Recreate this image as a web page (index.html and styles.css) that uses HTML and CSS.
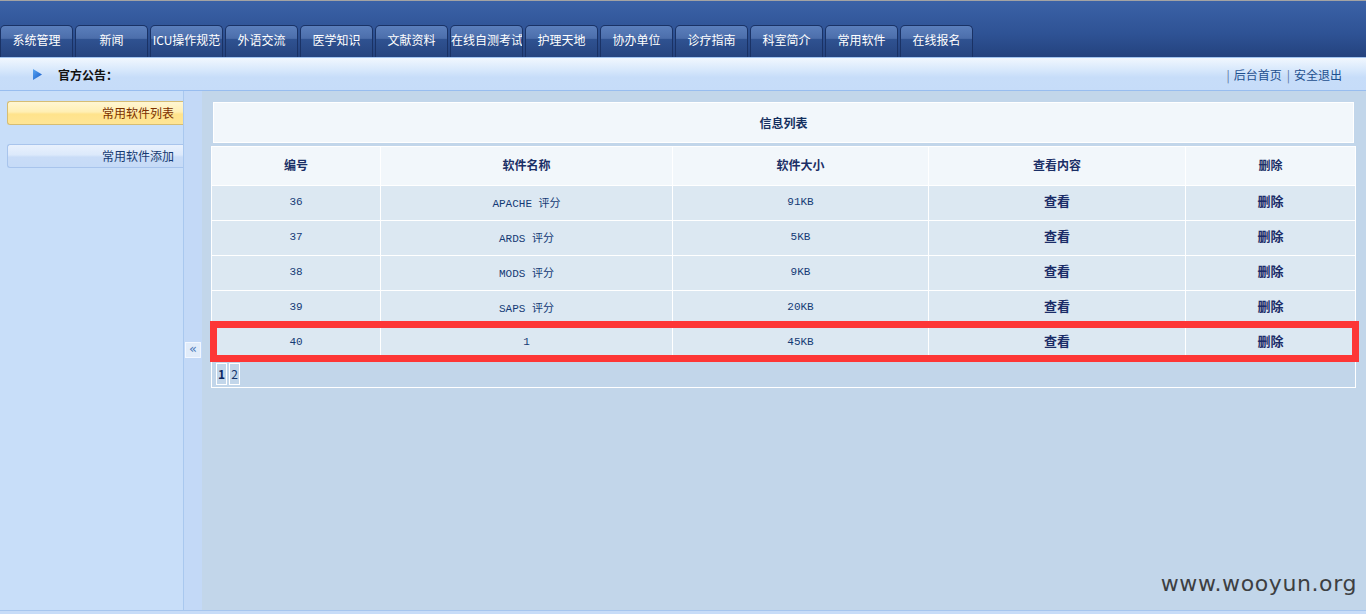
FILE: index.html
```html
<!DOCTYPE html>
<html lang="zh-CN">
<head>
<meta charset="utf-8">
<title>常用软件</title>
<link rel="stylesheet" href="styles.css">
</head>
<body>
<div class="page">
  <header class="top">
    <nav class="tabs">
      <a class="tab">系统管理</a>
      <a class="tab">新闻</a>
      <a class="tab">ICU操作规范</a>
      <a class="tab">外语交流</a>
      <a class="tab">医学知识</a>
      <a class="tab">文献资料</a>
      <a class="tab">在线自测考试</a>
      <a class="tab">护理天地</a>
      <a class="tab">协办单位</a>
      <a class="tab">诊疗指南</a>
      <a class="tab">科室简介</a>
      <a class="tab">常用软件</a>
      <a class="tab">在线报名</a>
    </nav>
  </header>
  <div class="notice">
    <div class="notice-left">
      <svg class="arrow" width="9" height="11" viewBox="0 0 9 11"><defs><linearGradient id="ag" x1="0" y1="0" x2="1" y2="1"><stop offset="0" stop-color="#5aa6f2"/><stop offset="1" stop-color="#1459c8"/></linearGradient></defs><polygon points="0,0 9,5.5 0,11" fill="url(#ag)"/></svg>
      <span class="notice-title">官方公告：</span>
    </div>
    <div class="notice-links">
      <span class="sep">|</span><a>后台首页</a><span class="sep">|</span><a>安全退出</a>
    </div>
  </div>
  <div class="body">
    <aside class="sidebar">
      <a class="side-btn active">常用软件列表</a>
      <a class="side-btn">常用软件添加</a>
    </aside>
    <div class="splitter">
      <span class="collapse">«</span>
    </div>
    <main class="main">
      <div class="panel-title">信息列表</div>
      <table class="list">
        <colgroup>
          <col class="c1"><col class="c2"><col class="c3"><col class="c4"><col class="c5">
        </colgroup>
        <thead>
          <tr><th>编号</th><th>软件名称</th><th>软件大小</th><th>查看内容</th><th>删除</th></tr>
        </thead>
        <tbody>
          <tr><td>36</td><td>APACHE 评分</td><td>91KB</td><td class="act">查看</td><td class="act">删除</td></tr>
          <tr><td>37</td><td>ARDS 评分</td><td>5KB</td><td class="act">查看</td><td class="act">删除</td></tr>
          <tr><td>38</td><td>MODS 评分</td><td>9KB</td><td class="act">查看</td><td class="act">删除</td></tr>
          <tr><td>39</td><td>SAPS 评分</td><td>20KB</td><td class="act">查看</td><td class="act">删除</td></tr>
          <tr><td>40</td><td>1</td><td>45KB</td><td class="act">查看</td><td class="act">删除</td></tr>
          <tr class="pager-row"><td colspan="5"><div class="pager"><span class="pg cur">1</span><span class="pg">2</span></div></td></tr>
        </tbody>
      </table>
    </main>
  </div>
  <div class="bottom"></div>
  <div class="highlight"></div>
  <div class="watermark">www.wooyun.org</div>
</div>
</body>
</html>
```
FILE: styles.css
```css
html, body {
  margin: 0;
  padding: 0;
  height: 614px;
  overflow: hidden;
}
body {
  font-family: "Noto Sans CJK SC", "Liberation Sans", sans-serif;
  font-size: 12px;
  background: #c8def9;
}
a { cursor: pointer; }
.page {
  position: relative;
  width: 1366px;
  height: 614px;
  display: flex;
  flex-direction: column;
}

/* top bar */
.top {
  box-sizing: border-box;
  height: 57px;
  border-top: 1px solid #a3a3a3;
  background: linear-gradient(#3b62a7, #2e5294 60%, #24427e);
  display: flex;
  align-items: flex-end;
}
.tabs {
  display: flex;
  gap: 2px;
  height: 32px;
}
.tab {
  box-sizing: border-box;
  width: 73px;
  height: 32px;
  border: 1px solid #1a3265;
  border-bottom: none;
  border-radius: 5px 5px 0 0;
  background: linear-gradient(#5b7fbc 0%, #4c6eab 40%, #2f5291 42%, #26447f 100%);
  color: #fff;
  font-size: 12px;
  line-height: 27px;
  text-align: center;
  white-space: nowrap;
  overflow: hidden;
}

/* notice bar */
.notice {
  box-sizing: border-box;
  height: 34px;
  border-top: 1px solid #a2c4f1;
  border-bottom: 1px solid #98bdef;
  background: linear-gradient(#f1f7fe 0%, #d9e9fc 35%, #c7ddf9 60%, #c6dcf9 100%);
  display: flex;
  align-items: center;
  justify-content: space-between;
  padding: 0 24px 0 33px;
}
.notice-left {
  display: flex;
  align-items: center;
  gap: 16px;
}
.notice-title {
  color: #111;
  font-size: 12px;
  font-weight: bold;
}
.notice-links {
  color: #1d4f8f;
  font-size: 12px;
  display: flex;
  align-items: center;
}
.notice-links .sep {
  color: #5a78a0;
  margin: 0 4px 0 5px;
}

/* body */
.body {
  flex: 1;
  display: flex;
  min-height: 0;
}
.sidebar {
  box-sizing: border-box;
  width: 185px;
  border-right: 1px solid #a9c8ef;
  background: #c8def9;
  display: flex;
  flex-direction: column;
  gap: 19px;
  padding-top: 10px;
  padding-left: 7px;
}
.side-btn {
  display: block;
  box-sizing: border-box;
  height: 24px;
  border: 1px solid #a8c4ec;
  border-right: none;
  border-radius: 3px 0 0 3px;
  background: linear-gradient(#e9f1fd 0%, #dce9fb 45%, #c9dcf7 55%, #c6dbf7 100%);
  color: #163a72;
  font-size: 12px;
  line-height: 21px;
  text-align: right;
  padding-right: 9px;
}
.side-btn.active {
  border-color: #d6bd73;
  background: linear-gradient(#fff6d2 0%, #ffefb4 45%, #ffe38c 55%, #ffe595 100%);
  color: #7b3000;
}
.splitter {
  width: 18px;
  background: #c3d9f7;
  display: flex;
  align-items: center;
  justify-content: center;
}
.collapse {
  box-sizing: border-box;
  width: 16px;
  height: 16px;
  margin-top: -2px;
  background: #e1ecfa;
  border: 1px solid #f2f7ff;
  color: #4b79b9;
  font-size: 13px;
  line-height: 12px;
  text-align: center;
  font-family: "DejaVu Sans", sans-serif;
}
.main {
  flex: 1;
  background: #c2d6ea;
  padding: 11px 10px 0 9px;
  box-sizing: border-box;
}
.panel-title {
  box-sizing: border-box;
  height: 41px;
  margin: 0 2px 3px;
  background: #f2f7fb;
  border: 1px solid #fff;
  color: #15305f;
  font-weight: bold;
  font-size: 12px;
  line-height: 40px;
  text-align: center;
}

/* table */
.list {
  width: 1144px;
  border-collapse: collapse;
  border: 1px solid #fff;
  table-layout: fixed;
}
.c1 { width: 169px; }
.c2 { width: 292px; }
.c3 { width: 256px; }
.c4 { width: 257px; }
.c5 { width: 170px; }
.list thead tr { height: 39px; }
.list tbody tr { height: 35px; }
.list th, .list td {
  border: 1px solid #fff;
  text-align: center;
  padding: 0;
}
.list th {
  background: #f2f7fb;
  color: #1b2f66;
  font-size: 12px;
  font-weight: bold;
  padding-bottom: 4px;
}
.list td {
  background: #dce8f2;
  color: #143a75;
  font-size: 11px;
  font-family: "Liberation Mono", "Noto Sans CJK SC", monospace;
  padding-bottom: 2px;
}
.list td.act {
  font-family: "Noto Sans CJK SC", sans-serif;
  font-size: 13px;
  font-weight: bold;
  color: #1b2c68;
  padding-bottom: 5px;
}
.list .pager-row { height: 27px; }
.list .pager-row td {
  background: transparent;
  text-align: left;
  border: none;
  padding: 0;
}
.pager {
  display: flex;
  gap: 2px;
  padding-left: 4px;
}
.pg {
  box-sizing: border-box;
  width: 11px;
  height: 22px;
  border: 1px solid #fff;
  color: #15366d;
  font-size: 12px;
  line-height: 19px;
  text-align: center;
  font-family: "Noto Sans CJK SC", sans-serif;
}
.pg.cur {
  font-weight: bold;
  color: #0c2660;
}

.bottom {
  box-sizing: border-box;
  height: 4px;
  border-top: 1px solid #a7c6ee;
  background: #c7dcf8;
}

/* annotation overlay */
.highlight {
  position: absolute;
  left: 210px;
  top: 321px;
  width: 1149px;
  height: 41px;
  box-sizing: border-box;
  border: 7px solid #fd3636;
  pointer-events: none;
}
.watermark {
  position: absolute;
  right: 9px;
  top: 571px;
  font-family: "DejaVu Sans", "Liberation Sans", sans-serif;
  font-size: 22px;
  color: #3d3f42;
  letter-spacing: 0.6px;
}
```
